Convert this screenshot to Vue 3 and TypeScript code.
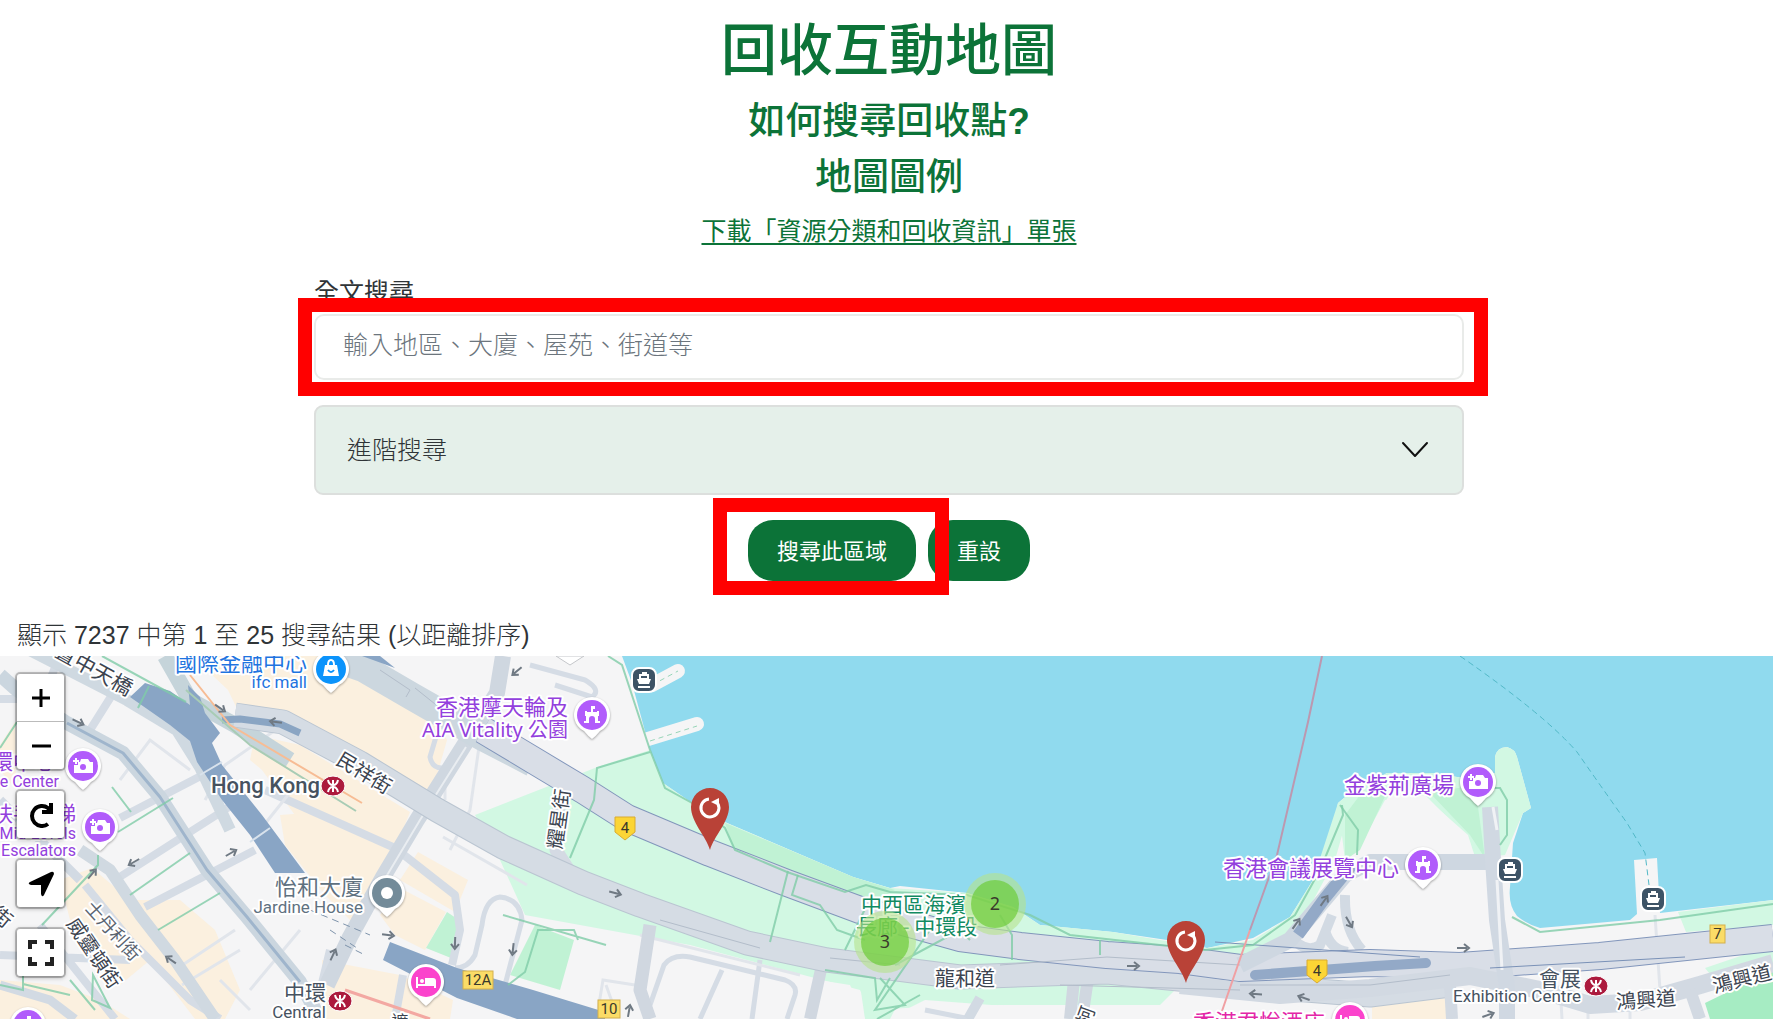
<script setup lang="ts">
import { ref } from 'vue'

type Glyph = 'camera' | 'castle' | 'bed' | 'bag' | 'dot'
interface Poi { x: number; y: number; color: string; glyph: Glyph }
interface Label {
  x: number; y: number; text: string; size: number; color: string
  anchor?: 'start' | 'middle' | 'end'; rotate?: number; weight?: number; wide?: boolean
}

const keyword = ref('')
const open = ref(false)

const purple = '#9340dd'
const slate = '#46525f'
const teal = '#128a62'

const pois: Poi[] = [
  { x: 331, y: 669, color: '#0b93fb', glyph: 'bag' },
  { x: 83, y: 766, color: '#b15cfb', glyph: 'camera' },
  { x: 100, y: 827, color: '#b15cfb', glyph: 'camera' },
  { x: 592, y: 715, color: '#b15cfb', glyph: 'castle' },
  { x: 387, y: 893, color: '#738b99', glyph: 'dot' },
  { x: 426, y: 982, color: '#fb43cc', glyph: 'bed' },
  { x: 1423, y: 865, color: '#b15cfb', glyph: 'castle' },
  { x: 1478, y: 782, color: '#b15cfb', glyph: 'camera' },
  { x: 1350, y: 1020, color: '#fb43cc', glyph: 'bed' },
  { x: 28, y: 1025, color: '#b15cfb', glyph: 'castle' },
]

const labels: Label[] = [
  { x: 307, y: 671, text: '國際金融中心', size: 22, color: '#1f74e0', anchor: 'end' },
  { x: 307, y: 688, text: 'ifc mall', size: 17, color: '#1f74e0', anchor: 'end' },
  { x: 55, y: 769, text: '環中心', size: 21, color: purple, anchor: 'end' },
  { x: 59, y: 787, text: 'e Center', size: 16, color: purple, anchor: 'end' },
  { x: 76, y: 821, text: '扶手電梯', size: 21, color: purple, anchor: 'end' },
  { x: 76, y: 839, text: 'Mid-Levels', size: 16, color: purple, anchor: 'end' },
  { x: 76, y: 856, text: 'Escalators', size: 16, color: purple, anchor: 'end' },
  { x: 320, y: 793, text: 'Hong Kong', size: 22, color: slate, anchor: 'end', weight: 500 },
  { x: 568, y: 715, text: '香港摩天輪及', size: 22, color: purple, anchor: 'end' },
  { x: 568, y: 737, text: 'AIA Vitality 公園', size: 20, color: purple, anchor: 'end', wide: true },
  { x: 363, y: 895, text: '怡和大廈', size: 22, color: '#5f717f', anchor: 'end' },
  { x: 363, y: 913, text: 'Jardine House', size: 17, color: '#5f717f', anchor: 'end' },
  { x: 326, y: 1000, text: '中環', size: 21, color: slate, anchor: 'end' },
  { x: 326, y: 1018, text: 'Central', size: 17, color: slate, anchor: 'end' },
  { x: 861, y: 912, text: '中西區海濱', size: 21, color: teal },
  { x: 856, y: 934, text: '長廊 - 中環段', size: 21, color: teal },
  { x: 935, y: 986, text: '龍和道', size: 20, color: '#3c4450' },
  { x: 1399, y: 876, text: '香港會議展覽中心', size: 22, color: purple, anchor: 'end' },
  { x: 1454, y: 793, text: '金紫荊廣場', size: 22, color: purple, anchor: 'end' },
  { x: 1325, y: 1030, text: '香港君悅酒店', size: 22, color: '#e326a8', anchor: 'end' },
  { x: 1581, y: 986, text: '會展', size: 21, color: slate, anchor: 'end' },
  { x: 1581, y: 1002, text: 'Exhibition Centre', size: 17, color: slate, anchor: 'end' },
  { x: 364, y: 773, text: '民祥街', size: 20, color: '#3c4450', anchor: 'middle', rotate: 31 },
  { x: 559, y: 819, text: '耀星街', size: 20, color: '#3c4450', anchor: 'middle', rotate: -82 },
  { x: 94, y: 670, text: '置中天橋', size: 21, color: '#3c4450', anchor: 'middle', rotate: 29 },
  { x: 113, y: 931, text: '士丹利街', size: 18, color: '#5b6470', anchor: 'middle', rotate: 48 },
  { x: 94, y: 953, text: '威靈頓街', size: 20, color: '#3c4450', anchor: 'middle', rotate: 56 },
  { x: 2, y: 917, text: '街', size: 20, color: '#3c4450', anchor: 'middle', rotate: 40 },
  { x: 1646, y: 1000, text: '鴻興道', size: 20, color: '#3c4450', anchor: 'middle', rotate: -4 },
  { x: 1742, y: 979, text: '鴻興道', size: 20, color: '#3c4450', anchor: 'middle', rotate: -14 },
  { x: 1086, y: 1016, text: '柯', size: 19, color: '#3c4450', anchor: 'middle', rotate: -70 },
  { x: 400, y: 1028, text: '遮', size: 17, color: '#3c4450', anchor: 'middle' },
]

const arrows = [
  [78, 722, 25], [220, 708, 35], [276, 722, 188], [134, 862, 150], [231, 853, -30],
  [92, 874, -50], [171, 960, 215], [517, 671, 140], [388, 935, 8], [455, 943, 92],
  [513, 949, 96], [333, 955, -65], [615, 893, 15], [629, 1011, -80], [1133, 966, 0],
  [1324, 901, -55], [1296, 924, -55], [1349, 922, 60], [1256, 994, 184], [1304, 998, 200],
  [1463, 948, 0], [1488, 1015, -20],
]

const stations = [[333, 786], [340, 1001], [1596, 986]]
const piers = [[644, 680], [1510, 870], [1653, 899]]
const shields = [[625, 827], [1317, 970]]
const plates: [number, number, number, string][] = [[463, 971, 30, '12A'], [598, 1000, 22, '10'], [1710, 925, 15, '7']]
const points = [[710, 850], [1186, 983]]
const clusters: [number, number, string][] = [[885, 942, '3'], [995, 904, '2']]
</script>

<template>
  <main class="page">
    <section class="intro">
      <h1>回收互動地圖</h1>
      <h2>如何搜尋回收點<b>?</b></h2>
      <h2>地圖圖例</h2>
      <a class="download" href="#leaflet">下載「資源分類和回收資訊」單張</a>
    </section>

    <form class="search" @submit.prevent>
      <label for="keyword">全文搜尋</label>
      <div class="field">
        <input id="keyword" v-model="keyword" type="text" placeholder="輸入地區、大廈、屋苑、街道等" />
        <span class="frame frame-field" aria-hidden="true"></span>
      </div>
      <button class="accordion" type="button" :aria-expanded="open" @click="open = !open">
        <span>進階搜尋</span>
        <svg width="28" height="18" viewBox="0 0 28 18"><path d="M2 2 14 15 26 2" fill="none" stroke="#111" stroke-width="2" stroke-linecap="round" stroke-linejoin="round" /></svg>
      </button>
      <div class="actions">
        <div class="action-wrap">
          <button class="pill" type="submit">搜尋此區域</button>
          <span class="frame frame-button" aria-hidden="true"></span>
        </div>
        <button class="pill" type="reset">重設</button>
      </div>
    </form>

    <p class="summary">顯示 7237 中第 1 至 25 搜尋結果 (以距離排序)</p>

    <section class="map" aria-label="地圖">
      <svg class="canvas" viewBox="0 656 1773 363" preserveAspectRatio="xMinYMin slice">
        <rect x="0" y="656" width="1773" height="363" fill="#f5f5f6" />

        <!-- building blocks -->
        <g fill="#fbf0df">
          <path d="M192 656H320L410 697 432 714 447 740 430 800 330 740 290 717 240 715 228 690Z" />
          <path d="M255 735 300 745 410 812 390 862 340 848 300 822 262 770 250 760Z" />
          <path d="M280 815 320 812 398 850 380 890 360 930 325 895 285 845Z" />
          <path d="M418 852 468 880 455 912 400 880Z" />
          <path d="M400 888 446 912 425 950 395 935 380 915Z" />
          <path d="M322 960 400 975 453 1000 450 1019H325Z" />
          <path d="M0 745 15 722 16 790 0 770Z" />
          <path d="M60 880 92 868 130 900 180 900 215 930 240 990 225 1019H195L150 960 120 985 70 920Z" />
          <path d="M0 980 60 985 100 1000 130 1019H0Z" />
          <path d="M1372 1003 1450 998V1019H1372Z" />
          <path d="M240 666 300 662 262 690 235 682Z" />
        </g>

        <!-- water -->
        <path fill="#90daee" d="M622 656 632 683 650 750 663 783 692 803 727 823 853 877 890 888 900 886 967 893 1013 907 1040 925 1113 932 1167 940 1207 948 1253 938 1290 917 1313 880 1330 843 1338 803 1350 793 1387 773 1433 773 1475 780 1495 773V757Q1497 747 1507 747 1515 749 1517 757L1531 808 1523 813 1513 843 1510 887Q1508 905 1517 916 1528 925 1540 928L1630 920 1637 914 1634 860 1657 858 1660 913 1773 900V656Z" />
        <path d="M652 685 678 671M648 739 697 724" stroke="#f5f5f6" stroke-width="14" stroke-linecap="round" />

        <!-- parks -->
        <g fill="#d2f8e3">
          <path d="M475 815 600 766 650 750 663 783 692 803 727 823 853 877 890 888 967 893 1013 907 1040 925 1113 932 1207 948 1253 940 1290 917 1313 880 1338 803 1345 825 1335 860 1300 925 1260 965 1180 985 1160 1005 960 1005 870 1010 860 990 690 945 525 915 500 860Z" />
          <path d="M1338 803 1350 793 1387 773 1433 773 1475 780 1495 773V757Q1497 747 1507 747 1515 749 1517 757L1531 808 1523 813 1505 855 1475 858 1465 835 1425 795 1385 800 1358 850 1345 860Z" />
          <path d="M1678 912 1773 900V925L1686 932ZM1705 968 1773 945V1000L1715 980Z" />
          <path d="M860 985 905 990 890 1019H865Z" />
        </g>
        <g fill="#c0f2d4">
          <path d="M725 823 853 877 895 890 875 901 780 875 735 852Z" />
          <path d="M447 912 462 922 456 960 426 948ZM535 925 574 940 560 990 510 975Z" />
          <path d="M1345 815 1360 795 1388 790 1360 850 1345 860ZM1430 793 1475 785 1485 858 1470 835Z" />
        </g>
        <path d="M1705 1003 1773 970V1019H1710Z" fill="#a6ecc3" />

        <!-- plain ground beside the exhibition centre and the garden blocks -->
        <g fill="#f5f5f6">
          <path d="M1388 797Q1405 785 1425 797L1468 835 1475 857 1355 862Z" />
          <path d="M660 955 850 985 865 1019H640Z" />
          <path d="M905 1010 925 1000 1060 1010V1019H900Z" />
          <path d="M1190 1019 1240 1000 1330 1010V1019Z" />
          <path d="M1350 885 1488 868 1492 943 1358 948Z" />
        </g>

        <!-- minor streets -->
        <g fill="none" stroke="#d5dce5" stroke-width="8" stroke-linejoin="round">
          <path d="M0 699H20M50 680 60 655M90 730 112 695M120 818 222 765M115 880 240 800M145 907 255 850M40 925 115 1019M0 955 130 960M85 885 130 940 190 1000 220 1019" />
          <path d="M265 790 395 848 455 895 460 930 452 965M330 950 318 1000M403 975 395 1019" />
        </g>
        <g fill="none" stroke="#d5dce5" stroke-width="5" stroke-linejoin="round">
          <path d="M505 985 522 920Q520 899 500 897 485 899 482 925L475 955Q468 968 455 968" />
          <path d="M650 1005 664 965Q672 954 690 957L785 980Q798 985 795 995L787 1019M722 970 700 1019M760 960 752 1019" />
          <path d="M925 1010 970 1019M530 665 585 680Q602 690 592 697L555 685M438 730 430 757Q432 768 442 768" />
        </g>
        <path d="M980 998 968 1019M1325 930Q1330 950 1348 952M1345 895Q1344 930 1362 950M1290 935Q1305 955 1320 945L1332 915" fill="none" stroke="#d2dae3" stroke-width="10" />
        <g fill="none" stroke="#e1e5eb" stroke-width="3">
          <path d="M120 780 150 740 190 770M175 970 235 930M182 985 240 950M250 990 300 930M250 1010 220 980M205 800 225 765 290 720M260 830 300 780" />
          <path d="M450 850 470 810 480 740M445 770 445 800" />
          <path d="M1655 915 1660 990M1588 1000V1019M1560 985 1562 1019M1630 1010V1019" />
          <path d="M598 1010 603 980 635 985M606 985 615 1010M640 935 800 975M443 837 527 885" />
        </g>

        <!-- arterial roads -->
        <g fill="none" stroke-linejoin="round">
          <path d="M0 675 17 690 67 723 123 753 160 797 207 870 247 917 300 982 320 1019" stroke="#cbd6df" stroke-width="14" />
          <path d="M67 723 123 753 160 797 207 870 247 917 300 982" stroke="#9fb5cc" stroke-width="3" />
          <path d="M20 645 127 700 177 730 200 767 230 830" stroke="#cfd9e1" stroke-width="12" />
          <path d="M80 850 110 870 140 915 175 960 215 1019" stroke="#d0d9e1" stroke-width="12" />
          <path d="M0 800 50 850 80 880M0 985 50 1000 75 1019" stroke="#d2dae3" stroke-width="9" />
          <path d="M165 656 190 700 235 725 290 760" stroke="#c5d4da" stroke-width="16" />
          <path d="M503 656 497 693 463 747 417 820 383 877 350 937 327 985" stroke="#cfd7e0" stroke-width="16" />
          <path d="M466 747 420 820 386 877" stroke="#e9edf1" stroke-width="2" />
          <path d="M650 925 640 990 650 1019" stroke="#d0d7e0" stroke-width="13" />
          <path d="M822 965 810 1019M1075 970 1070 1019M1090 965 1082 1019" stroke="#d0d7e0" stroke-width="12" />
          <path d="M560 790 556 850 575 880" stroke="#d4dae3" stroke-width="13" />
          <path d="M235 715 283 722 360 763 437 810 503 847 583 883 640 905 747 943 827 960 960 977 1107 972 1240 985 1370 995 1450 985" stroke="#bac5d1" stroke-width="25" />
          <path d="M235 715 283 722 360 763 437 810 503 847 583 883 640 905 747 943 827 960 960 977 1107 972 1240 985 1370 995 1450 985" stroke="#d5dce4" stroke-width="23" />
          <path d="M320 653 363 668 413 697 483 737 533 763" stroke="#ccd7df" stroke-width="28" />
          <path d="M483 730 533 760 583 790 627 818 710 853 787 883 860 910 960 938 1020 946 1107 955 1180 960 1240 968 1370 963 1460 966 1600 956 1773 938" stroke="#8296bb" stroke-width="28" />
          <path d="M483 730 533 760 583 790 627 818 710 853 787 883 860 910 960 938 1020 946 1107 955 1180 960 1240 968 1370 963 1460 966 1600 956 1773 938" stroke="#d9dee7" stroke-width="26" />
          <path d="M1255 975 1375 966 1426 963" stroke="#93a9c7" stroke-width="10" stroke-linecap="round" />
          <path d="M1180 985 1280 995 1370 988 1470 976 1540 990 1590 1005 1640 1002 1700 985 1773 963" stroke="#d2d9e2" stroke-width="18" />
          <path d="M1240 965 1290 940 1345 875 1370 862 1495 862" stroke="#ced7e1" stroke-width="16" />
          <path d="M1298 935 1325 898 1352 865" stroke="#93a9c7" stroke-width="12" />
          <path d="M1490 807 1493 860 1497 920 1507 987V1019" stroke="#d0d8e2" stroke-width="16" />
          <path d="M1493 807 1497 830M1497 880 1502 970" stroke="#f0f2f5" stroke-width="3" />
          <path d="M1690 990 1700 1019M1450 985 1452 1019" stroke="#d2d9e2" stroke-width="12" />
          <path d="M1215 942 1420 957M1490 968 1685 957" stroke="#7a91b7" stroke-width="1" />
          <path d="M380 670 410 690 406 697M415 688 440 708M660 920 760 948M830 958 900 965M1000 965 1107 957 1240 965M1060 985 1240 990M1240 985 1370 985 1450 975" stroke="#b3bdca" stroke-width="1" />
          <path d="M222 720 240 719 280 724 300 733" stroke="#8aa5c3" stroke-width="7" />
        </g>

        <!-- tunnels -->
        <g fill="#89a5c5">
          <path d="M130 697 145 683 170 691 190 705 188 685 200 697 205 713 220 733 212 743 222 765 262 815 305 873 275 873 250 835 222 800 197 762 190 741 170 725Z" />
          <path d="M390 942 457 968 533 990 605 1012V1019H517L457 998 383 960Z" />
          <path d="M362 656 395 668 380 656Z" />
        </g>
        <path d="M200 775 222 762M250 842 270 828" stroke="#d8e2ec" stroke-width="2" />
        <path d="M310 910 370 935M330 930 360 950M345 945 365 955" stroke="#7e93ab" stroke-width="1" stroke-dasharray="7 5" />

        <!-- footpaths -->
        <g fill="none" stroke="#7fcca8" stroke-width="2" stroke-opacity="0.8">
          <path d="M102 656 186 702M149 686 138 708M0 748 17 722M112 787 131 812M118 832 173 798M130 895 190 853M158 930 220 893M98 855V865L42 925M70 980 95 1010M23 975V990L0 985M23 984 70 995M93 975 110 1008 92 1000Z" />
          <path d="M608 656 622 665 650 750 665 788 692 803 725 828 735 850 787 872 845 892 866 885 890 892 967 895 1030 915 1070 935 1205 950 1253 945 1295 915 1320 870 1343 815 1342 805" />
          <path d="M650 752 597 768 594 800 570 858M788 871 770 942M798 875 792 895 820 905 837 930 865 940M867 905 845 950M1340 805 1358 830 1357 855M825 970 875 978 877 1000 890 978M880 978 905 1005 875 1010 930 930M895 965 960 930 970 940M1000 915 1012 935V960M1100 940V955M877 1019 920 995" />
          <path d="M503 915 606 945M578 940 574 930 538 930 525 972 508 985M1512 917 1540 932 1660 920 1773 904M1485 788 1500 788 1507 800V835L1500 845" />
          <path d="M652 685 678 671M650 741 697 726" stroke-width="1" stroke-dasharray="5 4" />
        </g>

        <!-- rail and ferry lines -->
        <g fill="none" stroke-width="2">
          <path d="M190 675 230 725 362 803" stroke="#f7bc94" />
          <path d="M186 690 250 745 356 811" stroke="#a8ccb5" />
          <path d="M345 990 430 1019" stroke="#f3a8a2" stroke-width="3" />
          <path d="M1322 656 1308 722 1277 855 1250 930" stroke="#bc98b0" />
          <path d="M1250 930 1222 1011" stroke="#f0a0a3" />
          <path d="M1460 656Q1545 715 1577 752 1600 785 1627 823L1645 853 1649 885" stroke="#51b8c7" stroke-width="1" stroke-dasharray="6 4" />
        </g>

        <g v-for="(a, i) in arrows" :key="'a' + i" :transform="`translate(${a[0]} ${a[1]}) rotate(${a[2]})`">
          <path d="M-6 0H4M1 -4 6 0 1 4" fill="none" stroke="#6f7983" stroke-width="2" />
        </g>

        <!-- route shields -->
        <g class="plate">
          <g v-for="(s, i) in shields" :key="'s' + i" :transform="`translate(${s[0]} ${s[1]})`">
            <path d="M-10 -10H10V5L0 13 -10 5Z" fill="#fcd535" stroke="#d9ab31" />
            <text y="6">4</text>
          </g>
          <g v-for="p in plates" :key="p[3]" :transform="`translate(${p[0]} ${p[1]})`">
            <rect :width="p[2]" height="18" fill="#fbdc67" stroke="#d4b04c" />
            <text :x="p[2] / 2" y="14">{{ p[3] }}</text>
          </g>
        </g>

        <text
          v-for="(l, i) in labels" :key="'l' + i" class="place" :class="{ wide: l.wide }"
          :font-size="l.size" :fill="l.color" :font-weight="l.weight ?? 400"
          :text-anchor="l.anchor ?? 'start'" :dominant-baseline="l.rotate ? 'central' : 'auto'"
          :transform="`translate(${l.x} ${l.y}) rotate(${l.rotate ?? 0})`"
        >{{ l.text }}</text>

        <g v-for="(s, i) in stations" :key="'m' + i" :transform="`translate(${s[0]} ${s[1]})`">
          <ellipse rx="12" ry="10" fill="#ac1a3d" stroke="#fff" />
          <path d="M0 -6V6M-5 -6Q-4 -1 0 -1 4 -1 5 -6M-5 6Q-4 1 0 1 4 1 5 6" fill="none" stroke="#fff" stroke-width="2" />
        </g>

        <g v-for="(s, i) in piers" :key="'f' + i" :transform="`translate(${s[0]} ${s[1]})`">
          <rect x="-12" y="-12" width="24" height="24" rx="7" fill="#3d5366" stroke="#fff" stroke-width="2" />
          <path d="M-5 -6H-2V-8H3V-6H5V-1H7L5 4H-5L-7 -1H-5Z" fill="#fff" />
          <path d="M-3 -4H3V-2H-3Z" fill="#3d5366" />
          <path d="M-6 7H6" stroke="#fff" stroke-width="2" />
        </g>

        <path d="M556 656 570 665 584 656Z" fill="#fff" stroke="#c4c6ca" />

        <g v-for="(p, i) in pois" :key="'p' + i" class="poi" :transform="`translate(${p.x} ${p.y})`">
          <path d="M0 24Q-4 21 -8 16A18 18 0 1 1 8 16Q4 21 0 24Z" fill="#fff" />
          <circle r="15" :fill="p.color" />
          <g v-if="p.glyph === 'camera'">
            <path d="M-2 -7H5L7 -4H10V7H-9V-1H-5V-4H-3Z" fill="#fff" />
            <path d="M-7 -8V-2M-10 -5H-4" stroke="#fff" stroke-width="2" />
            <circle cy="1" r="3" :fill="p.color" />
          </g>
          <path v-else-if="p.glyph === 'castle'" fill="#fff" d="M-7 -4H-5V-3H-1V-9H3V-6H1V-3H5V-4H7V1H6V6H8V8H3V4Q3 1 0 1 -3 1 -3 4V8H-8V6H-6V1H-7Z" />
          <g v-else-if="p.glyph === 'bed'">
            <path d="M-9 -5V6M9 6V-1Q9 -3 7 -3H0V3H-9M-9 3H9" fill="none" stroke="#fff" stroke-width="2" />
            <path d="M0 -3H8V3H0Z" fill="#fff" /><circle cx="-4" cy="-1" r="2" fill="#fff" />
          </g>
          <g v-else-if="p.glyph === 'bag'">
            <path d="M-6 -4H6L8 7H-8Z" fill="#fff" />
            <path d="M-3 -4Q-3 -9 0 -9 3 -9 3 -4" fill="none" stroke="#fff" stroke-width="2" />
            <path d="M-3 1Q0 5 3 1" fill="none" :stroke="p.color" stroke-width="2" />
          </g>
          <circle v-else r="6" fill="#fff" />
        </g>

        <g v-for="(c, i) in clusters" :key="'c' + i" class="cluster" :transform="`translate(${c[0]} ${c[1]})`">
          <circle r="31" fill="#b5e28c" fill-opacity="0.6" />
          <circle r="24" fill="#6ecc39" fill-opacity="0.7" />
          <text y="6">{{ c[2] }}</text>
        </g>

        <g v-for="(p, i) in points" :key="'r' + i" :transform="`translate(${p[0]} ${p[1]})`">
          <path d="M0 0C-4 -14 -19 -28 -19 -43A19 19 0 0 1 19 -43C19 -28 4 -14 0 0Z" fill="#b94237" />
          <path d="M-1 -51A9 9 0 1 0 8 -46" fill="none" stroke="#fff" stroke-width="3" />
          <path d="M1 -48 9 -52 9 -44Z" fill="#fff" />
        </g>
      </svg>

      <div class="controls">
        <div class="group">
          <button type="button" aria-label="放大"><svg viewBox="0 0 26 26"><path d="M13 4V22M4 13H22" stroke="#000" stroke-width="3" /></svg></button>
          <button type="button" aria-label="縮小"><svg viewBox="0 0 26 26"><path d="M4 13H23" stroke="#000" stroke-width="3" /></svg></button>
        </div>
        <div class="group">
          <button type="button" aria-label="重新載入"><svg viewBox="0 0 26 26"><path d="M20 22A10 10 0 1 1 20 6L23 10" fill="none" stroke="#000" stroke-width="4" /><path d="M25 1V12H14V8H21V1Z" /></svg></button>
        </div>
        <div class="group">
          <button type="button" aria-label="定位"><svg viewBox="0 0 26 26"><path d="M23 1Q26 0 26 3L16 24Q14 27 13 23V14H3Q-1 13 2 11Z" /></svg></button>
        </div>
        <div class="group">
          <button type="button" aria-label="全螢幕"><svg viewBox="0 0 26 26"><path d="M2 9V2H9M17 2H24V9M24 17V24H17M9 24H2V17" fill="none" stroke="#222" stroke-width="4" /></svg></button>
        </div>
      </div>
    </section>
  </main>
</template>

<style>
body {
  margin: 0;
  background: #fff;
}
</style>

<style scoped>
.page {
  display: flex;
  flex-direction: column;
  min-height: 100vh;
  color: #2f3437;
  font-family: "Liberation Sans", "Noto Sans CJK TC", sans-serif;
  font-size: 25px;
  font-weight: 300;
}

.intro {
  display: flex;
  flex-direction: column;
  align-items: center;
  padding: 17px 0 0 5px;
  color: #0c7338;
}

h1,
h2 {
  margin: 0;
  font-weight: 500;
}

h1 {
  margin-bottom: 9px;
  font-size: 56px;
  line-height: 68px;
}

h2 {
  font-size: 37px;
  line-height: 56px;
}

.download {
  margin-top: 6px;
  color: inherit;
  font-weight: 400;
  line-height: 38px;
  text-underline-offset: 3px;
}

.search {
  display: flex;
  flex-direction: column;
  box-sizing: border-box;
  width: 100%;
  max-width: 1155px;
  margin: 25px auto 0;
  padding-left: 5px;
}

.search label {
  margin-bottom: 5px;
  font-weight: 400;
  line-height: 34px;
}

.field,
.action-wrap {
  position: relative;
}

.field {
  display: flex;
  margin-bottom: 25px;
}

.field input {
  box-sizing: border-box;
  width: 100%;
  height: 66px;
  padding: 0 27px 4px;
  border: 2px solid #e9ebe9;
  border-radius: 10px;
  background: #fff;
  color: inherit;
  font: inherit;
}

.field input::placeholder {
  color: #6c757d;
  opacity: 1;
}

.frame {
  position: absolute;
  z-index: 2;
  border: 14px solid #f00;
  pointer-events: none;
}

.frame-field {
  inset: -16px -24px -16px -16px;
}

.frame-button {
  inset: -22px -33px -14px -35px;
}

.accordion {
  display: flex;
  align-items: center;
  justify-content: space-between;
  height: 90px;
  padding: 0 33px 4px 31px;
  border: 2px solid #dcdfdd;
  border-radius: 9px;
  background: #e5f0ea;
  color: inherit;
  font: inherit;
}

.accordion svg {
  margin-top: 4px;
}

.actions {
  display: flex;
  justify-content: center;
  gap: 12px;
  margin-top: 25px;
}

.pill {
  height: 61px;
  padding: 0 29px 4px;
  border: 0;
  border-radius: 25px;
  background: #0c7338;
  color: #fff;
  font-family: inherit;
  font-size: 22px;
  font-weight: 400;
}

.summary {
  margin: 35px 0 0;
  padding: 0 0 2px 17px;
  line-height: 38px;
}

.map {
  position: relative;
  flex: 1 0 360px;
  overflow: hidden;
  background: #f5f5f6;
}

.canvas {
  position: absolute;
  inset: 0;
  width: 100%;
  height: 100%;
}

.place {
  font-family: Roboto, "Noto Sans CJK TC", sans-serif;
  paint-order: stroke;
  stroke: #fff;
  stroke-width: 4px;
  stroke-linejoin: round;
}

.place.wide {
  font-family: "Noto Sans", "Noto Sans CJK TC", sans-serif;
}

.plate text,
.cluster text {
  fill: #3a3a2c;
  font-family: Roboto, sans-serif;
  font-size: 15px;
  font-weight: 400;
  text-anchor: middle;
}

.cluster text {
  font-family: "Noto Sans", sans-serif;
  font-size: 18px;
}

.poi {
  filter: drop-shadow(0 1px 1px rgba(0, 0, 0, 0.35));
}

.controls {
  position: absolute;
  top: 18px;
  left: 17px;
  display: flex;
  flex-direction: column;
  gap: 22px;
}

.group {
  display: flex;
  flex-direction: column;
  gap: 1px;
  overflow: hidden;
  border-radius: 3px;
  background: #bbb;
  box-shadow: 0 0 0 2px rgba(0, 0, 0, 0.2), 0 1px 5px rgba(0, 0, 0, 0.4);
}

.group button {
  display: flex;
  align-items: center;
  justify-content: center;
  width: 47px;
  height: 47px;
  padding: 0;
  border: 0;
  background: #fff;
}

.group svg {
  width: 26px;
  height: 26px;
}
</style>
